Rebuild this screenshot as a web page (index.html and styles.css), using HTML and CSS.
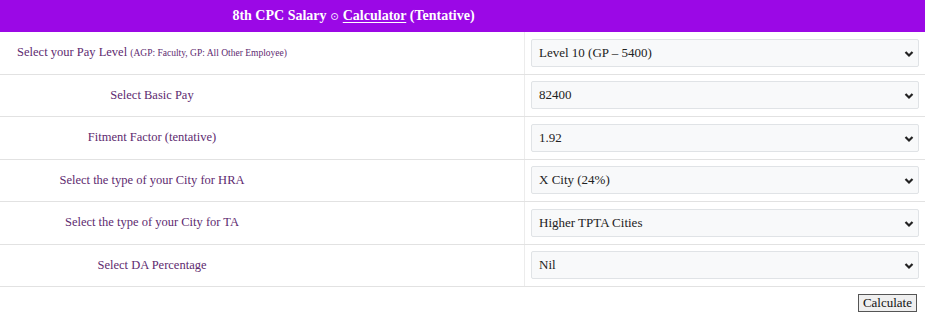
FILE: index.html
```html
<!DOCTYPE html>
<html>
<head>
<meta charset="utf-8">
<link rel="stylesheet" href="styles.css">
</head>
<body>
<div class="calc">
  <div class="head"><div class="head-inner">8th CPC Salary <span class="dot">⊙</span> <span class="u">Calculator</span> (Tentative)</div></div>
  <div class="row">
    <div class="label"><span class="lab">Select your Pay Level <small>(AGP: Faculty, GP: All Other Employee)</small></span></div>
    <div class="field"><div class="sel"><span>Level 10 (GP – 5400)</span><svg class="chev" viewBox="0 0 10 8" width="10" height="8"><path d="M1.5 2 L5 5.5 L8.5 2" fill="none" stroke="#222" stroke-width="2.2"/></svg></div></div>
  </div>
  <div class="row">
    <div class="label"><span class="lab">Select Basic Pay</span></div>
    <div class="field"><div class="sel"><span>82400</span><svg class="chev" viewBox="0 0 10 8" width="10" height="8"><path d="M1.5 2 L5 5.5 L8.5 2" fill="none" stroke="#222" stroke-width="2.2"/></svg></div></div>
  </div>
  <div class="row">
    <div class="label"><span class="lab">Fitment Factor (tentative)</span></div>
    <div class="field"><div class="sel"><span>1.92</span><svg class="chev" viewBox="0 0 10 8" width="10" height="8"><path d="M1.5 2 L5 5.5 L8.5 2" fill="none" stroke="#222" stroke-width="2.2"/></svg></div></div>
  </div>
  <div class="row">
    <div class="label"><span class="lab">Select the type of your City for HRA</span></div>
    <div class="field"><div class="sel"><span>X City (24%)</span><svg class="chev" viewBox="0 0 10 8" width="10" height="8"><path d="M1.5 2 L5 5.5 L8.5 2" fill="none" stroke="#222" stroke-width="2.2"/></svg></div></div>
  </div>
  <div class="row">
    <div class="label"><span class="lab">Select the type of your City for TA</span></div>
    <div class="field"><div class="sel"><span>Higher TPTA Cities</span><svg class="chev" viewBox="0 0 10 8" width="10" height="8"><path d="M1.5 2 L5 5.5 L8.5 2" fill="none" stroke="#222" stroke-width="2.2"/></svg></div></div>
  </div>
  <div class="row">
    <div class="label"><span class="lab">Select DA Percentage</span></div>
    <div class="field"><div class="sel"><span>Nil</span><svg class="chev" viewBox="0 0 10 8" width="10" height="8"><path d="M1.5 2 L5 5.5 L8.5 2" fill="none" stroke="#222" stroke-width="2.2"/></svg></div></div>
  </div>
  <div class="actions"><button class="btn">Calculate</button></div>
</div>
</body>
</html>
```
FILE: styles.css
```css
html, body {
  margin: 0;
  padding: 0;
  background: #ffffff;
}
body {
  font-family: "Liberation Serif", "DejaVu Serif", serif;
  font-size: 13px;
}
.calc {
  width: 925px;
}
.head {
  height: 32px;
  background: #9b08e6;
  color: #ffffff;
  font-weight: bold;
  font-size: 14px;
  display: flex;
  align-items: center;
}
.head-inner {
  width: 707px;
  text-align: center;
}
.dot {
  font-weight: normal;
  font-size: 11px;
  color: #f0dcff;
}
.u {
  text-decoration: underline;
  text-underline-offset: 2px;
}
.row {
  display: grid;
  grid-template-columns: 525px 1fr;
  height: 42.5px;
  box-sizing: border-box;
  border-bottom: 1px solid #e2e2e2;
}
.label {
  border-right: 1px solid #ececec;
  display: flex;
  align-items: center;
  color: #5e2a70;
  font-size: 12.5px;
}
.lab {
  width: 304px;
  text-align: center;
  white-space: nowrap;
}
.lab small {
  font-size: 9.5px;
}
.field {
  display: flex;
  align-items: center;
  padding: 0 6px;
}
.sel {
  position: relative;
  flex: 1;
  height: 28px;
  box-sizing: border-box;
  border: 1px solid #e0e3e6;
  border-radius: 2px;
  background: #f8f9fa;
  display: flex;
  align-items: center;
  padding-left: 7px;
  color: #222222;
  font-size: 13px;
}
.chev {
  position: absolute;
  right: 4px;
  top: 10px;
}
.actions {
  display: flex;
  justify-content: flex-end;
  padding: 7px 8px 0 0;
}
.btn {
  font-family: "Liberation Serif", serif;
  font-size: 13px;
  color: #111;
  background: #efefef;
  border: 1px solid #555;
  border-radius: 0;
  padding: 0 4px;
  height: 18px;
  line-height: 16px;
}
```
